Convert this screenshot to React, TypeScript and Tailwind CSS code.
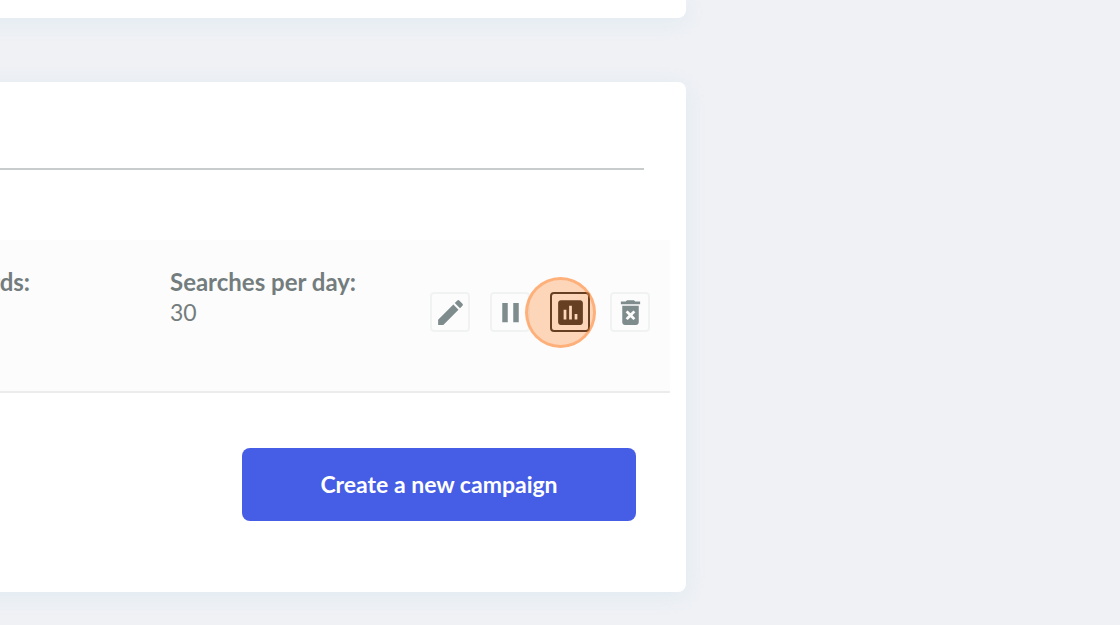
import type { ReactNode } from "react";
import { MdAssessment, MdDeleteForever, MdEdit, MdPause } from "react-icons/md";

const cardShadow = "shadow-[0_4px_20px_rgba(215,232,238,0.6)]";

type IconButtonProps = {
  label: string;
  active?: boolean;
  children: ReactNode;
};

function IconButton({ label, active = false, children }: IconButtonProps) {
  return (
    <button
      type="button"
      aria-label={label}
      className={
        active
          ? "flex size-10 items-center justify-center rounded-sm border-2 border-black pl-px pt-px text-black"
          : "flex size-10 items-center justify-center rounded-sm border-2 border-[#f1f3f3] pl-px pt-px text-[#7f8c8d]"
      }
    >
      {children}
    </button>
  );
}

export default function App() {
  return (
    <main className="min-h-screen overflow-hidden bg-[#eff1f5] font-['Lato',sans-serif] text-[#747d7e]">
      <div className="flex w-[61.25%] flex-col gap-16 pb-8">
        <section className={`-ml-16 h-[18px] rounded-br-lg bg-white ${cardShadow}`} />

        <section className={`-ml-16 rounded-r-lg bg-white pb-[71px] pl-16 pt-[86px] ${cardShadow}`}>
          <hr className="mr-[42px] border-t-2 border-[#c9cccc]" />

          <div className="mr-4 mt-[70px] flex h-[153px] items-start border-b-2 border-[#ececed] bg-[#fcfcfc]">
            <div className="flex w-[30px] shrink-0 justify-end overflow-hidden pt-[27px] text-2xl font-bold leading-[30px]">
              rds:
            </div>
            <div className="ml-[140px] pt-[27px] text-2xl leading-[30px]">
              <div className="whitespace-nowrap font-bold">Searches per day:</div>
              <div className="text-[23px]">30</div>
            </div>
            <div className="ml-auto mr-5 flex shrink-0 gap-5 pt-[52px]">
              <IconButton label="Edit campaign">
                <MdEdit className="size-[33px] shrink-0" />
              </IconButton>
              <IconButton label="Pause campaign">
                <MdPause className="size-[33px] shrink-0" />
              </IconButton>
              <div className="relative">
                <IconButton label="View statistics" active>
                  <MdAssessment className="size-[33px] shrink-0" />
                </IconButton>
                <span className="pointer-events-none absolute -left-[25px] -top-[15px] size-[71px] rounded-full border-[3px] border-[#ff8c3c]/50 bg-[#ff9b55]/40" />
              </div>
              <IconButton label="Delete campaign">
                <MdDeleteForever className="size-[33px] shrink-0" />
              </IconButton>
            </div>
          </div>

          <div className="mr-[50px] mt-[55px] flex justify-end">
            <button
              type="button"
              className="h-[73px] w-[394px] rounded-lg bg-[#465de5] text-[23px] font-bold text-white"
            >
              Create a new campaign
            </button>
          </div>
        </section>
      </div>
    </main>
  );
}
